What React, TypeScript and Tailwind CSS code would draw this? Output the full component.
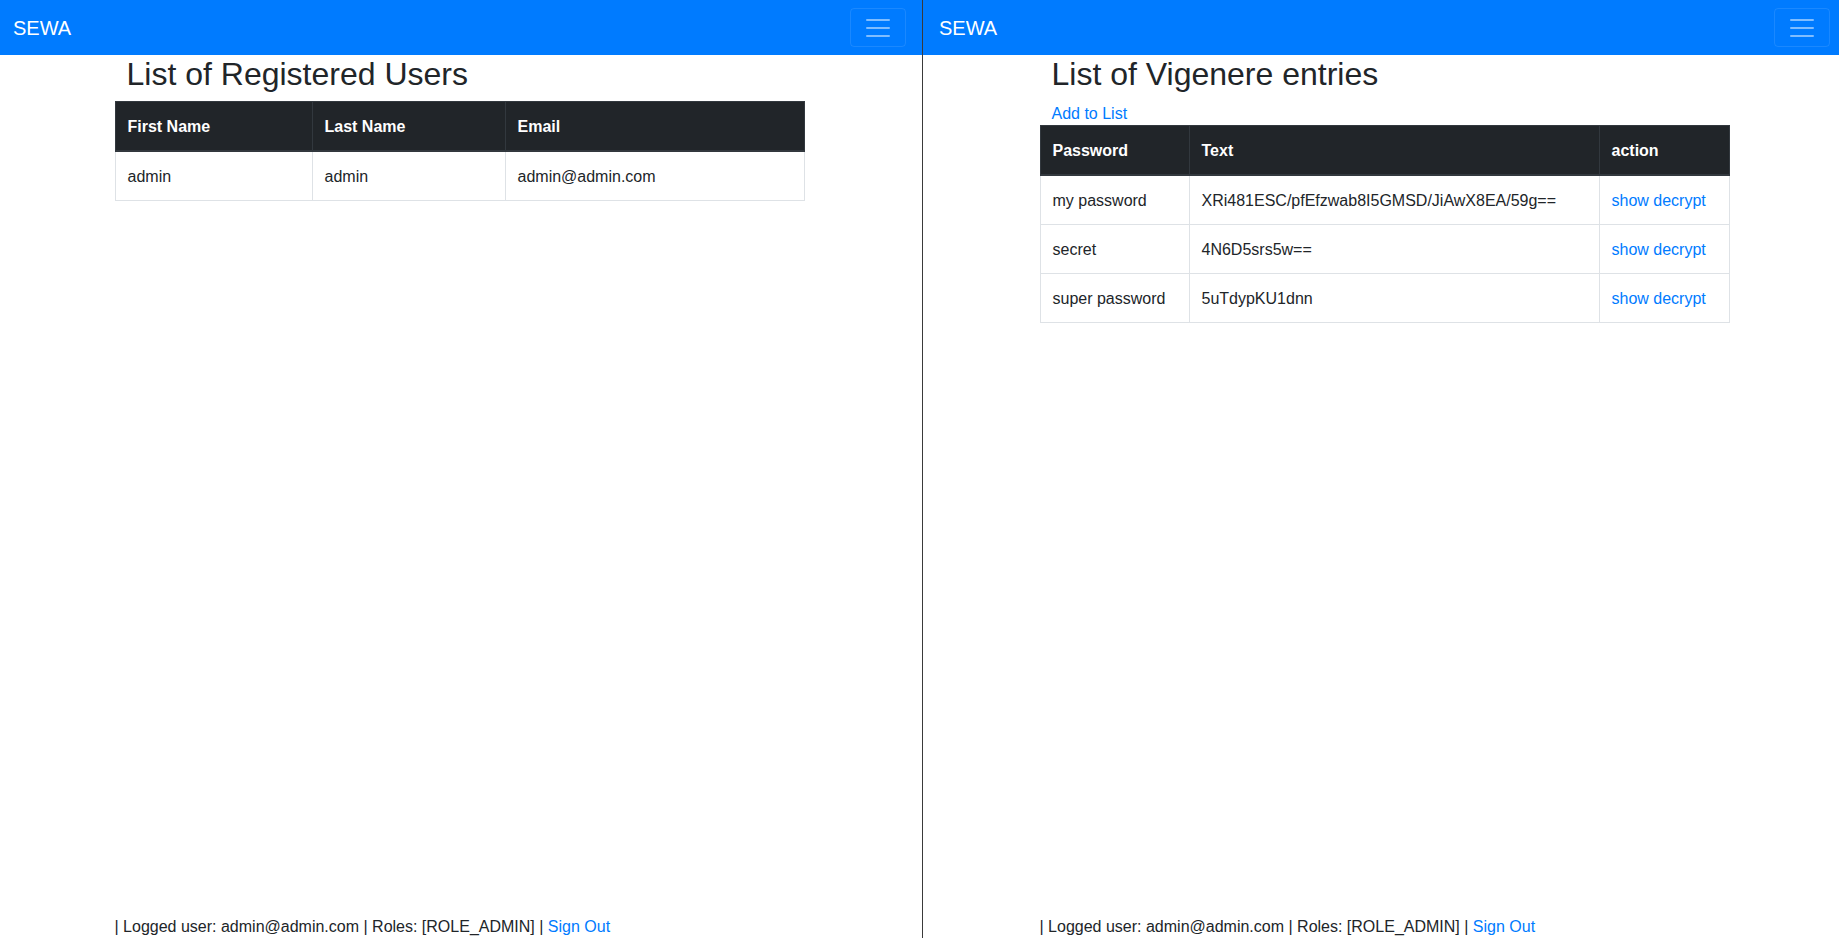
import React from "react";

const FONT = { fontFamily: '"Liberation Sans", Arial, Helvetica, sans-serif' };

function Navbar() {
  return (
    <div className="h-[55px] shrink-0 bg-[#007bff] flex items-center justify-between px-4">
      <span className="text-white text-[20px] leading-[30px]">SEWA</span>
      <div className="w-[56px] h-[39px] rounded-[4px] border border-[rgba(255,255,255,0.1)] flex items-center justify-center">
        <svg width="30" height="30" viewBox="0 0 30 30">
          <path
            d="M4 7h22M4 15h22M4 23h22"
            stroke="rgba(255,255,255,0.5)"
            strokeWidth="2"
            strokeLinecap="round"
          />
        </svg>
      </div>
    </div>
  );
}

type Col = { label: string; w?: string };

function DataTable({ cols, rows }: { cols: Col[]; rows: React.ReactNode[][] }) {
  return (
    <table className="w-full table-fixed border-collapse text-[16px] leading-6">
      <thead>
        <tr>
          {cols.map((c, i) => (
            <th
              key={i}
              className={`${c.w ?? ""} bg-[#212529] text-white font-bold text-left px-3 pt-[13px] pb-[11px] border border-[#32383e] border-b-2`}
            >
              {c.label}
            </th>
          ))}
        </tr>
      </thead>
      <tbody>
        {rows.map((r, ri) => (
          <tr key={ri}>
            {r.map((cell, ci) => (
              <td
                key={ci}
                className="px-3 pt-[13px] pb-[11px] border border-[#dee2e6] text-[#212529] whitespace-nowrap overflow-hidden"
              >
                {cell}
              </td>
            ))}
          </tr>
        ))}
      </tbody>
    </table>
  );
}

function Footer() {
  return (
    <div className="w-[690px] mx-auto h-6 leading-6 text-[16px] text-[#212529] mb-[-1px] shrink-0">
      | Logged user: admin@admin.com | Roles: [ROLE_ADMIN] |{" "}
      <a className="text-[#007bff]">Sign Out</a>
    </div>
  );
}

function Pane({ className, children }: { className: string; children: React.ReactNode }) {
  return (
    <div className={`${className} shrink-0 h-[938px] flex flex-col bg-white`}>
      <Navbar />
      <div className="flex-1 w-[690px] mx-auto">{children}</div>
      <Footer />
    </div>
  );
}

const link = (t: string) => <a className="text-[#007bff]">{t}</a>;

export default function App() {
  return (
    <div className="w-[1839px] h-[938px] overflow-hidden text-[#212529]" style={FONT}>
      <div className="flex w-[1849px] h-[938px] ml-[-3px]">
        <Pane className="w-[925px]">
          <h2 className="text-[32px] leading-[1.2] font-normal pl-3 mb-2">List of Registered Users</h2>
          <DataTable
            cols={[
              { label: "First Name", w: "w-[197px]" },
              { label: "Last Name", w: "w-[193px]" },
              { label: "Email" },
            ]}
            rows={[["admin", "admin", "admin@admin.com"]]}
          />
        </Pane>
        <div className="w-px h-[938px] bg-[#3a3a3a] shrink-0" />
        <Pane className="w-[923px]">
          <h2 className="text-[32px] leading-[1.2] font-normal pl-3 mb-2">List of Vigenere entries</h2>
          <div className="pl-3 pt-px mb-[-1px] text-[16px] leading-6">
            <a className="text-[#007bff]">Add to List</a>
          </div>
          <DataTable
            cols={[
              { label: "Password", w: "w-[149px]" },
              { label: "Text", w: "w-[410px]" },
              { label: "action" },
            ]}
            rows={[
              ["my password", "XRi481ESC/pfEfzwab8I5GMSD/JiAwX8EA/59g==", link("show decrypt")],
              ["secret", "4N6D5srs5w==", link("show decrypt")],
              ["super password", "5uTdypKU1dnn", link("show decrypt")],
            ]}
          />
        </Pane>
      </div>
    </div>
  );
}
